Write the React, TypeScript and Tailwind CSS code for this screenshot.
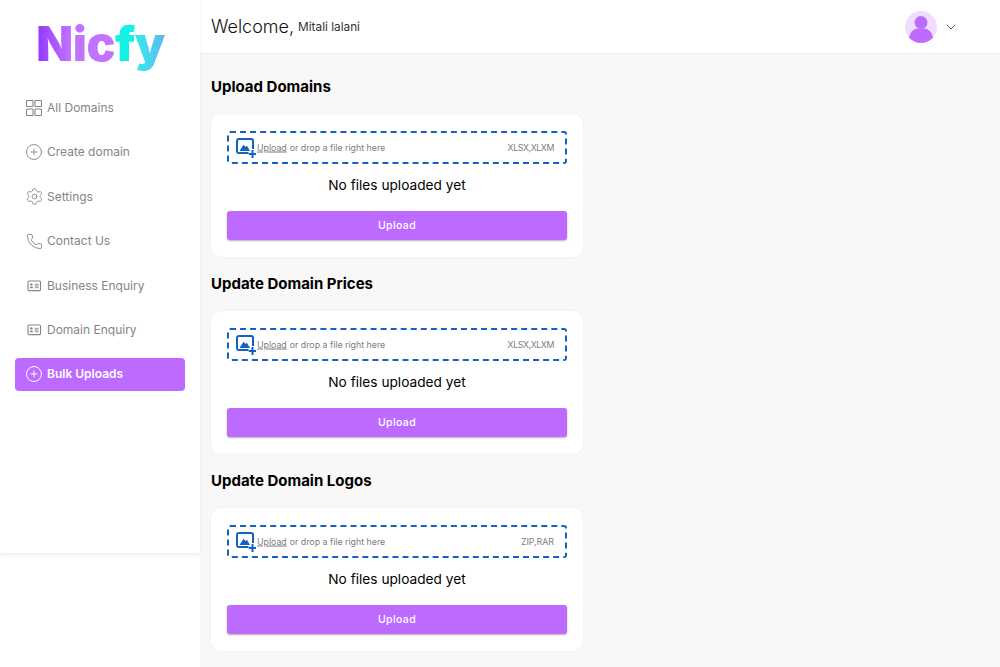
import { ChevronDown, CirclePlus, Phone, Settings } from 'lucide-react'
import type { ReactNode } from 'react'

const font = { fontFamily: '"Inter", "Liberation Sans", sans-serif' }

function GridIcon() {
  return (
    <svg width="16" height="16" viewBox="0 0 16 16" fill="none" stroke="#858585" strokeWidth="1.100">
      <rect x="0.500" y="0.500" width="6.500" height="6" rx="0.800" />
      <rect x="9" y="0.500" width="6.500" height="6" rx="0.800" />
      <rect x="0.500" y="9" width="6.500" height="6.500" rx="0.800" />
      <rect x="9" y="9" width="6.500" height="6.500" rx="0.800" />
    </svg>
  )
}

function CardIcon() {
  return (
    <svg width="16" height="16" viewBox="0 0 16 16" fill="none">
      <rect x="2" y="3" width="12.500" height="9.600" rx="1" stroke="#858585" strokeWidth="1.100" />
      <circle cx="5.400" cy="6.400" r="1.200" fill="#858585" />
      <path d="M3.600 10.200c.2-1.300 1-1.800 1.800-1.800s1.600.5 1.800 1.800z" fill="#858585" />
      <path d="M8.800 6.300h3.800M8.800 8h3.800M8.800 9.700h3.800" stroke="#858585" strokeWidth="0.900" />
    </svg>
  )
}

function UploadIcon() {
  return (
    <svg width="20" height="20" viewBox="0 0 20 20" fill="none" className="shrink-0">
      <path d="M12.500 15H2.800A1.800 1.800 0 0 1 1 13.200V2.800A1.800 1.800 0 0 1 2.800 1h12.400A1.800 1.800 0 0 1 17 2.800v8.200" stroke="#1262c4" strokeWidth="2" />
      <path d="M3.500 13 7.600 6.800l1.900 2.300 1.400-1.300 3.100 5.200z" fill="#1262c4" />
      <path d="M16.500 12v8M12.700 16h7.300" stroke="#1262c4" strokeWidth="2" />
    </svg>
  )
}

function Logo() {
  return (
    <div className="flex h-[91.600px] items-start justify-center pl-[1px] pt-[15px] text-[48px] leading-[58px] font-black tracking-[-0.500px]" style={font}>
      <span className="bg-gradient-to-r from-[#9233ff] to-[#c272ff] to-45% bg-clip-text text-transparent">Nic</span>
      <span className="bg-gradient-to-r from-[#14f2e8] from-35% to-[#60b4f2] bg-clip-text text-transparent">fy</span>
    </div>
  )
}

function NavItem({ icon, label, active }: { icon: ReactNode; label: string; active?: boolean }) {
  return (
    <div
      className={
        active
          ? 'flex h-[33px] items-center gap-[5px] rounded-[4px] bg-[#bd6bff] pl-[11px] text-[12px] font-semibold text-white'
          : 'flex h-[33px] items-center gap-[5px] pl-[11px] text-[12px] text-[#858585]'
      }
    >
      <span className="flex w-[16px] items-center justify-center">{icon}</span>
      {label}
    </div>
  )
}

function UploadCard({ title, types, typesClass }: { title: string; types: string; typesClass?: string }) {
  return (
    <section>
      <h2 className="h-[20px] text-[15px] leading-[20px] font-bold text-black">{title}</h2>
      <div className="mt-[17px] h-[143px] w-[372px] rounded-[10px] bg-white px-[16px] pt-[17px] shadow-[0_0_3px_rgba(0,0,0,0.05)]">
        <div className="flex h-[33px] items-center rounded-[3px] border-2 border-dashed border-[#1262c4] pl-[7px] pr-[11px] text-[8.800px] leading-[12px] text-[#7d7d7d]">
          <UploadIcon />
          <span className="ml-[1px] -translate-y-[0.500px] underline">Upload</span>
          <span className="ml-[3px] -translate-y-[0.500px]">or drop a file right here</span>
          <span className={`ml-auto -translate-y-[0.500px] ${typesClass ?? ''}`}>{types}</span>
        </div>
        <p className="mt-[11px] h-[20px] text-center text-[13.700px] leading-[20px] text-black">No files uploaded yet</p>
        <button className="mt-[16px] h-[29px] w-full rounded-[3px] bg-[#bd6bff] text-[10.500px] font-medium tracking-[0.400px] text-white shadow-[0_1px_2px_rgba(0,0,0,0.3)]">
          Upload
        </button>
      </div>
    </section>
  )
}

export default function App() {
  const iconClass = 'shrink-0 text-[#858585]'
  return (
    <div className="flex h-[667px] w-[1000px] overflow-hidden bg-white" style={font}>
      <aside className="relative z-10 h-[553px] w-[200px] shrink-0 bg-white shadow-[0_2px_4px_rgba(0,0,0,0.07)]">
        <Logo />
        <nav className="flex flex-col gap-[11.400px] px-[15px]">
          <NavItem icon={<GridIcon />} label="All Domains" />
          <NavItem icon={<CirclePlus size={18} strokeWidth={1.200} className={iconClass} />} label="Create domain" />
          <NavItem icon={<Settings size={19} strokeWidth={1.100} className={iconClass} />} label="Settings" />
          <NavItem icon={<Phone size={17} strokeWidth={1.300} className={iconClass} />} label="Contact Us" />
          <NavItem icon={<CardIcon />} label="Business Enquiry" />
          <NavItem icon={<CardIcon />} label="Domain Enquiry" />
          <NavItem icon={<CirclePlus size={18} strokeWidth={1.300} className="shrink-0 text-white" />} label="Bulk Uploads" active />
        </nav>
      </aside>
      <div className="flex min-w-0 flex-1 flex-col bg-[#f8f8f8]">
        <header className="flex h-[54px] shrink-0 items-center border-b border-[#efefef] bg-white pl-[11px] pr-[41px]">
          <span className="text-[18px] font-light text-[#111]">Welcome,</span>
          <span className="ml-[4px] mt-[2px] text-[11.800px] text-[#333]">Mitali lalani</span>
          <div className="ml-auto flex items-center gap-[6px]">
            <div className="h-[32px] w-[32px] overflow-hidden rounded-full bg-[#f0dcff]">
              <svg width="32" height="32" viewBox="0 0 32 32">
                <circle cx="16" cy="11.500" r="6.500" fill="#bd6bff" />
                <path d="M3.500 32c0-9 3.500-13.500 8.500-14.500h8c5 1 8.500 5.500 8.500 14.500z" fill="#bd6bff" />
              </svg>
            </div>
            <ChevronDown size={16} strokeWidth={1.400} className="text-[#555]" />
          </div>
        </header>
        <main className="flex flex-col gap-[17px] pl-[11px] pt-[23px]">
          <UploadCard title="Upload Domains" types="XLSX,XLXM" typesClass="tracking-[-0.400px]" />
          <UploadCard title="Update Domain Prices" types="XLSX,XLXM" typesClass="tracking-[-0.400px]" />
          <UploadCard title="Update Domain Logos" types="ZIP,RAR" />
        </main>
      </div>
    </div>
  )
}
